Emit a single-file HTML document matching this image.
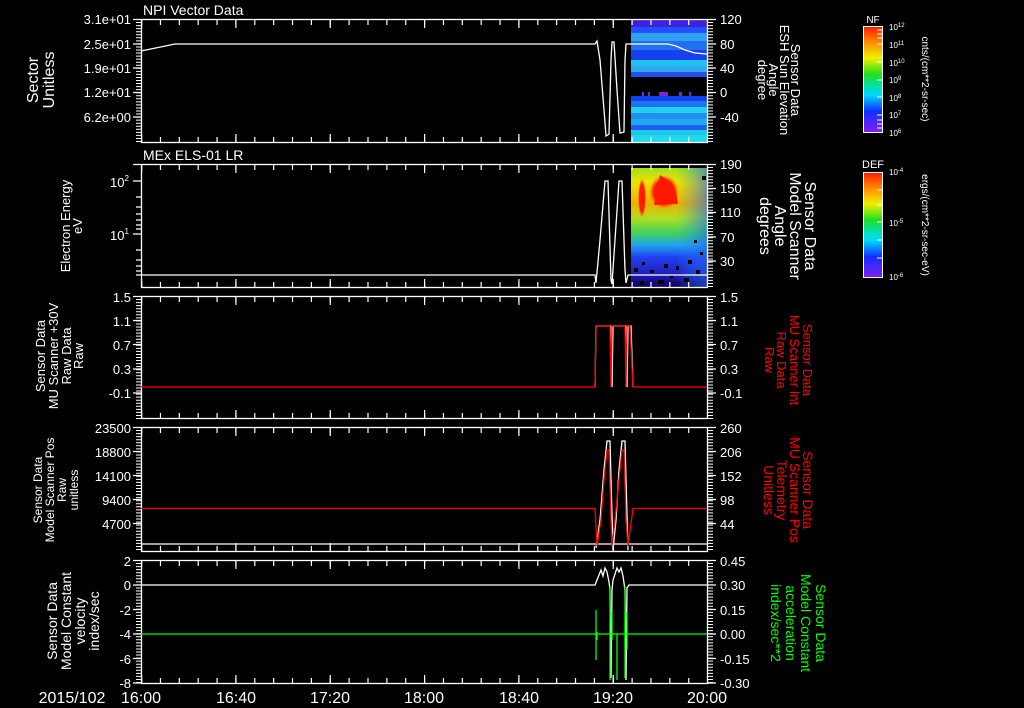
<!DOCTYPE html>
<html><head><meta charset="utf-8"><style>
html,body{margin:0;padding:0;background:#000;width:1024px;height:708px;overflow:hidden}
svg{display:block}
text{font-family:"Liberation Sans",sans-serif;fill:#fff}
</style></head><body>
<svg width="1024" height="708" viewBox="0 0 1024 708" xmlns="http://www.w3.org/2000/svg">
<defs>
<linearGradient id="cb" x1="0" y1="0" x2="0" y2="1">
<stop offset="0" stop-color="#ff1a00"/><stop offset="0.15" stop-color="#ff8c00"/><stop offset="0.3" stop-color="#f0f000"/><stop offset="0.45" stop-color="#20e020"/><stop offset="0.58" stop-color="#00e0c0"/><stop offset="0.65" stop-color="#00d8ff"/><stop offset="0.8" stop-color="#1030ff"/><stop offset="1" stop-color="#8020f0"/></linearGradient>
<linearGradient id="sp2" x1="0" y1="0" x2="0" y2="1">
<stop offset="0" stop-color="#a0e020"/><stop offset="0.12" stop-color="#f0e000"/><stop offset="0.3" stop-color="#f0b000"/><stop offset="0.42" stop-color="#b0e020"/><stop offset="0.55" stop-color="#40d060"/><stop offset="0.65" stop-color="#20a0f0"/><stop offset="0.75" stop-color="#2040f0"/><stop offset="0.88" stop-color="#2020c0"/><stop offset="1" stop-color="#100060"/></linearGradient>
<linearGradient id="sp2h" x1="0" y1="0" x2="1" y2="0">
<stop offset="0" stop-color="#000" stop-opacity="0"/><stop offset="0.6" stop-color="#20a0f0" stop-opacity="0"/><stop offset="1" stop-color="#2060f0" stop-opacity="0.6"/></linearGradient>
<radialGradient id="red1"><stop offset="0" stop-color="#ff1000"/><stop offset="0.7" stop-color="#ff2000"/><stop offset="1" stop-color="#ff6000" stop-opacity="0"/></radialGradient>
</defs>

<!-- Panel 1 spectrogram -->
<g>
<rect x="631" y="20" width="76" height="7" fill="#4020e0"/>
<rect x="631" y="27" width="76" height="6" fill="#2050ff"/>
<rect x="631" y="33" width="76" height="8" fill="#30a0f0"/>
<rect x="631" y="41" width="76" height="9" fill="#2070f0"/>
<rect x="631" y="50" width="76" height="10" fill="#1840f0"/>
<rect x="631" y="60" width="76" height="6" fill="#20c0f0"/>
<rect x="631" y="66" width="76" height="6" fill="#30a8f0"/>
<rect x="631" y="72" width="76" height="5" fill="#2050f0"/>
<rect x="631" y="96" width="76" height="5" fill="#1040f0"/>
<rect x="631" y="101" width="76" height="6" fill="#2070f0"/>
<rect x="631" y="107" width="76" height="6" fill="#20d0f0"/>
<rect x="631" y="113" width="76" height="6" fill="#2090f0"/>
<rect x="631" y="119" width="76" height="6" fill="#20a8f0"/>
<rect x="631" y="125" width="76" height="5" fill="#2060f0"/>
<rect x="631" y="130" width="76" height="5" fill="#20c8e8"/>
<rect x="631" y="135" width="76" height="7" fill="#20d8f0"/>
<g fill="#8020e0"><rect x="642" y="92" width="2" height="4"/><rect x="648" y="92" width="2" height="4"/><rect x="659" y="92" width="9" height="4"/><rect x="679" y="92" width="3" height="4"/><rect x="689" y="92" width="2" height="4"/></g>
</g>

<!-- Panel 2 spectrogram -->
<g>
<rect x="631" y="168" width="76" height="119" fill="url(#sp2)"/>
<rect x="631" y="168" width="76" height="119" fill="url(#sp2h)"/>
<ellipse cx="642" cy="198" rx="4" ry="20" fill="url(#red1)"/>
<ellipse cx="664" cy="192" rx="15" ry="17" fill="url(#red1)"/>
<path d="M654 205 L660 175 L668 180 L676 192 L678 204 Z" fill="#ff1800"/>
<g fill="#000">
<rect x="634" y="268" width="4" height="4"/><rect x="642" y="262" width="3" height="3"/><rect x="650" y="270" width="4" height="3"/><rect x="664" y="264" width="4" height="4"/><rect x="676" y="266" width="3" height="4"/><rect x="688" y="260" width="4" height="4"/><rect x="696" y="270" width="4" height="4"/><rect x="700" y="252" width="3" height="3"/><rect x="658" y="280" width="6" height="4"/><rect x="684" y="278" width="5" height="4"/><rect x="640" y="281" width="4" height="4"/><rect x="702" y="176" width="4" height="4"/><rect x="694" y="240" width="3" height="3"/><rect x="670" y="275" width="3" height="3"/>
</g>
</g>

<!-- Colorbars -->
<rect x="863.5" y="26.5" width="19" height="106" fill="url(#cb)" stroke="#fff"/>
<rect x="863.5" y="172.5" width="19" height="105" fill="url(#cb)" stroke="#fff"/>
<g stroke="#fff" stroke-width="1"><path d="M877 30H882M877 34H882M877 38H882M877 44H882M877 62H882M877 80H882M877 97H882M877 115H882M877 120H882M877 124H882M877 128H882M877 190H882M877 205H882M877 222H882M877 240H882M877 258H882"/></g>
<text x="873" y="23" font-size="10" text-anchor="middle">NF</text>
<text x="873" y="168" font-size="11" text-anchor="middle">DEF</text>
<g font-size="8">
<text x="889" y="30">10<tspan dy="-3" font-size="6">12</tspan></text>
<text x="889" y="48">10<tspan dy="-3" font-size="6">11</tspan></text>
<text x="889" y="66">10<tspan dy="-3" font-size="6">10</tspan></text>
<text x="889" y="83">10<tspan dy="-3" font-size="6">9</tspan></text>
<text x="889" y="101">10<tspan dy="-3" font-size="6">8</tspan></text>
<text x="889" y="118">10<tspan dy="-3" font-size="6">7</tspan></text>
<text x="889" y="136">10<tspan dy="-3" font-size="6">6</tspan></text>
<text x="889" y="175">10<tspan dy="-3" font-size="6">-4</tspan></text>
<text x="889" y="226">10<tspan dy="-3" font-size="6">-5</tspan></text>
<text x="889" y="280">10<tspan dy="-3" font-size="6">-6</tspan></text>
</g>
<text transform="translate(922,79) rotate(90)" font-size="10" text-anchor="middle">cnts/(cm**2-sr-sec)</text>
<text transform="translate(922,225) rotate(90)" font-size="10" text-anchor="middle">ergs/(cm**2-sr-sec-eV)</text>

<!-- Frames -->
<g fill="none" stroke="#fff" stroke-width="1.3">
<rect x="141.5" y="19.5" width="566" height="123"/>
<rect x="141.5" y="164.5" width="566" height="123"/>
<rect x="141.5" y="296.5" width="566" height="122"/>
<rect x="141.5" y="427.5" width="566" height="124"/>
<rect x="141.5" y="560.5" width="566" height="123"/>
</g>
<!-- time ticks -->
<g stroke="#fff" fill="none">
<g stroke-width="6" stroke-dasharray="1.2 17.666">
<path d="M141 22H708M141 140H708M141 167H708M141 285H708M141 299H708M141 416H708M141 430H708M141 549H708M141 563H708M141 681H708"/>
</g>
<g stroke-width="9" stroke-dasharray="1.2 93.13">
<path d="M141 23.5H708M141 138.5H708M141 168.5H708M141 283.5H708M141 300.5H708M141 414.5H708M141 431.5H708M141 547.5H708M141 564.5H708M141 679.5H708"/>
</g>
<!-- y minor ticks -->
<g stroke-width="5" stroke-dasharray="1 2.05">
<path d="M138.5 19V143M710.5 19V143M138.5 296V419M710.5 296V419M138.5 427V552M710.5 427V552M138.5 560V684M710.5 560V684M710.5 164V288"/>
</g>
</g>
<g stroke="#fff" stroke-width="1.2">
<path d="M133 19.5H141M133 44H141M133 68H141M133 92.5H141M133 117H141M708 19.5H716M708 44H716M708 68H716M708 92.5H716M708 117H716"/>
<path d="M133 164.5H141M133 181H141M136 197H141M136 207H141M136 214H141M136 220H141M136 225H141M136 229H141M133 234H141M136 250H141M136 260H141M136 266H141M136 271H141M136 275H141M708 164.5H716M708 188.5H716M708 212.5H716M708 237H716M708 261H716"/>
<path d="M133 296.5H141M133 320.5H141M133 344.5H141M133 369H141M133 393H141M708 296.5H716M708 320.5H716M708 344.5H716M708 369H716M708 393H716"/>
<path d="M133 427.5H141M133 451.5H141M133 475.5H141M133 499.5H141M133 523.5H141M708 427.5H716M708 451.5H716M708 475.5H716M708 499.5H716M708 523.5H716"/>
<path d="M133 560.5H141M133 585H141M133 609.5H141M133 634H141M133 658.5H141M133 683H141M708 560.5H716M708 585H716M708 609.5H716M708 634H716M708 658.5H716M708 683H716"/>
</g>

<!-- Data lines -->
<g fill="none" stroke-width="1.3" stroke-linejoin="miter">
<path stroke="#fff" d="M141 51 L175 44 L595 44 L597 41 L600 60 L604 110 L606 136 L609 134 L611 60 L612 42 L614 42 L617 90 L620 133 L624 132 L625 60 L626 44 L668 44 L676 46 L685 50 L695 53 L707 54"/>
<path stroke="#fff" d="M141 275 L595 275 L596 283 L600 240 L605 181 L608 181 L611 280 L612 284 L615 240 L619 181 L622 181 L625 270 L626 283 L628 275 L707 275"/>
<path stroke="#fff" d="M595 387 L596 326 L611 326 L612 387 L613 326 L626 326 L627 387 L628 326 L631 326 L633 387"/>
<path stroke="#f00" d="M141 387 L595 387 L596 326 L610 326 L611 387 L612 326 L625 326 L626 387 L627 326 L630 326 L633 387 L707 387"/>
<path stroke="#fff" d="M141 544 L707 544"/>
<path stroke="#fff" d="M596 548 L600 520 L604 470 L607 441 L610 441 L611 480 L613 550 L616 520 L619 470 L622 441 L625 441 L626 480 L628 550"/>
<path stroke="#f00" d="M141 508.5 L595 508.5 L597 546 L601 520 L604 480 L607 450 L609 450 L611 520 L612 546 L615 520 L619 480 L622 450 L624 450 L626 520 L628 546 L633 508.5 L707 508.5"/>
<path stroke="#fff" d="M141 585 L595 585 L597 580 L599 575 L601 570 L603 576 L605 568 L607 572 L609 582 L610 590 L611 678 L612 590 L613 580 L615 574 L617 568 L619 572 L621 568 L623 576 L625 590 L626 680 L627 588 L629 585 L707 585"/>
<path stroke="#0f0" d="M141 634 L707 634 M596 610 L596 660 M597 632 L597 640 M610 586 L610 680 M612 612 L612 640 M617 634 L617 680 M625 586 L625 678 M627 612 L627 650"/>
</g>

<!-- Titles -->
<text x="143" y="15" font-size="14">NPI Vector Data</text>
<text x="143" y="160" font-size="14">MEx ELS-01 LR</text>

<!-- Left y labels -->
<g font-size="13" text-anchor="end">
<text x="131" y="24">3.1e+01</text><text x="131" y="49">2.5e+01</text><text x="131" y="73">1.9e+01</text><text x="131" y="97">1.2e+01</text><text x="131" y="122">6.2e+00</text>
<text x="131" y="302">1.5</text><text x="131" y="326">1.1</text><text x="131" y="350">0.7</text><text x="131" y="374">0.3</text><text x="131" y="398">-0.1</text>
<text x="131" y="433">23500</text><text x="131" y="457">18800</text><text x="131" y="481">14100</text><text x="131" y="505">9400</text><text x="131" y="529">4700</text>
<text x="131" y="566">2</text><text x="131" y="590">0</text><text x="131" y="615">-2</text><text x="131" y="639">-4</text><text x="131" y="664">-6</text><text x="131" y="688">-8</text>
</g>
<text x="110" y="187" font-size="13">10<tspan dy="-6" font-size="8">2</tspan></text>
<text x="110" y="240" font-size="13">10<tspan dy="-6" font-size="8">1</tspan></text>

<!-- Right y labels -->
<g font-size="13">
<text x="720" y="24">120</text><text x="720" y="49">80</text><text x="720" y="73">40</text><text x="720" y="97">0</text><text x="720" y="122">-40</text>
<text x="720" y="169">190</text><text x="720" y="193">150</text><text x="720" y="217">110</text><text x="720" y="242">70</text><text x="720" y="266">30</text>
<text x="720" y="302">1.5</text><text x="720" y="326">1.1</text><text x="720" y="350">0.7</text><text x="720" y="374">0.3</text><text x="720" y="398">-0.1</text>
<text x="720" y="433">260</text><text x="720" y="457">206</text><text x="720" y="481">152</text><text x="720" y="505">98</text><text x="720" y="529">44</text>
<text x="720" y="566">0.45</text><text x="720" y="590">0.30</text><text x="720" y="615">0.15</text><text x="720" y="639">0.00</text><text x="720" y="664">-0.15</text><text x="720" y="688">-0.30</text>
</g>

<!-- Bottom time labels -->
<g font-size="16" text-anchor="middle">
<text x="72" y="703">2015/102</text>
<text x="141" y="703">16:00</text><text x="236" y="703">16:40</text><text x="330" y="703">17:20</text><text x="424" y="703">18:00</text><text x="519" y="703">18:40</text><text x="613" y="703">19:20</text><text x="707" y="703">20:00</text>
</g>

<!-- Left axis titles -->
<text transform="translate(38,80) rotate(-90)" font-size="16" text-anchor="middle"><tspan x="0" dy="0">Sector</tspan><tspan x="0" dy="16">Unitless</tspan></text>
<text transform="translate(70,226) rotate(-90)" font-size="13" text-anchor="middle"><tspan x="0" dy="0">Electron Energy</tspan><tspan x="0" dy="12">eV</tspan></text>
<text transform="translate(45,356) rotate(-90)" font-size="13" text-anchor="middle"><tspan x="0" dy="0">Sensor Data</tspan><tspan x="0" dy="13">MU Scanner +30V</tspan><tspan x="0" dy="13">Raw Data</tspan><tspan x="0" dy="12">Raw</tspan></text>
<text transform="translate(42,490) rotate(-90)" font-size="12" text-anchor="middle"><tspan x="0" dy="0">Sensor Data</tspan><tspan x="0" dy="12">Model Scanner Pos</tspan><tspan x="0" dy="12">Raw</tspan><tspan x="0" dy="12">unitless</tspan></text>
<text transform="translate(57,621) rotate(-90)" font-size="14" text-anchor="middle"><tspan x="0" dy="0">Sensor Data</tspan><tspan x="0" dy="14">Model Constant</tspan><tspan x="0" dy="14">velocity</tspan><tspan x="0" dy="14">index/sec</tspan></text>

<!-- Right axis titles -->
<text transform="translate(791,80) rotate(90)" font-size="13" text-anchor="middle"><tspan x="0" dy="0">Sensor Data</tspan><tspan x="0" dy="11">ESH Sun Elevation</tspan><tspan x="0" dy="11">Angle</tspan><tspan x="0" dy="11">degree</tspan></text>
<text transform="translate(805,226) rotate(90)" font-size="16" text-anchor="middle"><tspan x="0" dy="0">Sensor Data</tspan><tspan x="0" dy="15">Model Scanner</tspan><tspan x="0" dy="15">Angle</tspan><tspan x="0" dy="15">degrees</tspan></text>
<text transform="translate(803,360) rotate(90)" font-size="13" text-anchor="middle" style="fill:#f00"><tspan x="0" dy="0">Sensor Data</tspan><tspan x="0" dy="13">MU Scanner Int</tspan><tspan x="0" dy="13">Raw Data</tspan><tspan x="0" dy="12">Raw</tspan></text>
<text transform="translate(803,490) rotate(90)" font-size="14" text-anchor="middle" style="fill:#f00"><tspan x="0" dy="0">Sensor Data</tspan><tspan x="0" dy="13">MU Scanner Pos</tspan><tspan x="0" dy="13">Telemetry</tspan><tspan x="0" dy="13">Unitless</tspan></text>
<text transform="translate(816,623) rotate(90)" font-size="14" text-anchor="middle" style="fill:#0f0"><tspan x="0" dy="0">Sensor Data</tspan><tspan x="0" dy="15">Model Constant</tspan><tspan x="0" dy="15">acceleration</tspan><tspan x="0" dy="15">index/sec**2</tspan></text>
</svg>
</body></html>
